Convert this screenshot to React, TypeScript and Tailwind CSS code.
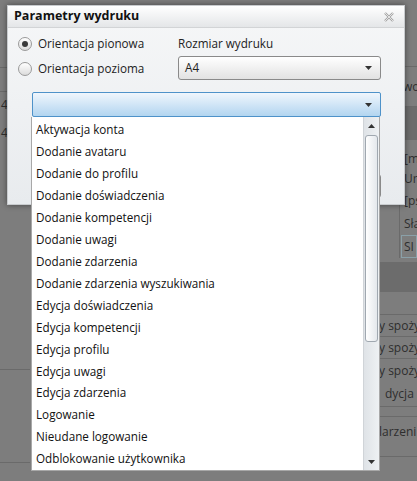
import React from 'react';

const ITEMS = [
  'Aktywacja konta',
  'Dodanie avataru',
  'Dodanie do profilu',
  'Dodanie doświadczenia',
  'Dodanie kompetencji',
  'Dodanie uwagi',
  'Dodanie zdarzenia',
  'Dodanie zdarzenia wyszukiwania',
  'Edycja doświadczenia',
  'Edycja kompetencji',
  'Edycja profilu',
  'Edycja uwagi',
  'Edycja zdarzenia',
  'Logowanie',
  'Nieudane logowanie',
  'Odblokowanie użytkownika',
];

const FONT = "font-['Open_Sans',sans-serif]";

function Caret({ up = false }: { up?: boolean }) {
  return (
    <svg width="7" height="4" viewBox="0 0 7 4" className="shrink-0">
      <path d={up ? 'M0 4 L3.5 0 L7 4 Z' : 'M0 0 L7 0 L3.5 4 Z'} fill="#333" />
    </svg>
  );
}

function Radio({ checked }: { checked?: boolean }) {
  return (
    <span className="w-[14px] h-[14px] rounded-full border border-[#9a9a9a] bg-gradient-to-b from-[#ffffff] to-[#dcdcdc] flex items-center justify-center shrink-0">
      {checked && <span className="w-[6px] h-[6px] rounded-full bg-[#3a3a3a]" />}
    </span>
  );
}

// dimmed page behind the modal
function Backdrop() {
  return (
    <div className="flex justify-between h-[481px] text-[12px] text-[#2e2e2e] whitespace-nowrap">
      <div className="w-[30px] flex flex-col">
        <div className="h-[68px] border-b border-[#6a6a6a]" />
        <div className="h-[24px] border-b border-[#6a6a6a]" />
        <div className="h-[26px] flex items-center pl-[1px]">4</div>
        <div className="h-[30px] flex items-center pl-[1px]">4</div>
        <div className="h-[222px] border-b border-[#6a6a6a]" />
        <div className="h-[93px] border-b border-[#6a6a6a]" />
      </div>
      <div className="w-[38px] flex flex-col overflow-hidden">
        <div className="h-[67px] border-b border-[#6a6a6a]" />
        <div className="h-[40px] flex items-center pl-[24px] border-b border-[#6a6a6a]">wo</div>
        <div className="h-[33px] bg-[#6c6c6c]" />
        <div className="flex flex-col border-l border-[#6a6a6a] ml-[20px] pl-[4px]">
          <div className="h-[28px] flex items-end">[m</div>
          <div className="h-[22px] flex items-center">Ur</div>
          <div className="h-[22px] flex items-center">[ps</div>
          <div className="h-[23px] flex items-center">Sła</div>
          <div className="h-[23px] flex items-center border border-[#8aa0a8] -ml-[3px] pl-[2px]">SI</div>
        </div>
        <div className="h-[4px]" />
        <div className="h-[30px] bg-[#6c6c6c]" />
        <div className="h-[23px] border-b border-[#6a6a6a]" />
        <div className="h-[22px] flex items-center border-b border-[#6a6a6a]">y spoży</div>
        <div className="h-[22px] flex items-center border-b border-[#6a6a6a]">y spoży</div>
        <div className="h-[23px] flex items-center">y spoży</div>
        <div className="h-[25px] flex items-center border-b border-[#6a6a6a] pl-[6px]">dycja</div>
        <div className="h-[10px] border-b border-[#6a6a6a]" />
        <div className="h-[30px] flex items-center">larzeni</div>
        <div className="h-[10px] border-b border-[#6a6a6a]" />
      </div>
    </div>
  );
}

export default function App() {
  return (
    <div className={`relative w-[417px] h-[481px] overflow-hidden bg-[#7d7d7d] ${FONT}`}>
      <Backdrop />

      {/* Dialog */}
      <div className="absolute left-[7px] top-[5px] w-[398px] h-[200px] flex flex-col border border-[#c8cbce] bg-gradient-to-b from-[#f6f7f8] to-[#e8ebee] shadow-[0_0_6px_rgba(0,0,0,0.45)]">
        <div className="h-[22px] flex items-center justify-between px-[6px] bg-gradient-to-b from-[#ffffff] to-[#e4e6e8] border-b border-[#d2d4d6]">
          <span className="text-[12.5px] font-bold text-[#111]">Parametry wydruku</span>
          <svg width="10" height="10" viewBox="0 0 10 10" className="mr-[4px]">
            <path d="M1 1 L9 9 M9 1 L1 9" stroke="#a4a4a4" strokeWidth="2.4" />
            <path d="M1 1 L9 9 M9 1 L1 9" stroke="#f4f4f4" strokeWidth="0.8" />
          </svg>
        </div>

        <div className="flex-1 flex flex-col pl-[10px] pr-[23px] pt-[4px] text-[11.7px] text-[#222]">
          <div className="flex">
            <div className="w-[160px] flex flex-col">
              <label className="h-[24px] flex items-center gap-[6px]">
                <Radio checked />
                <span>Orientacja pionowa</span>
              </label>
              <label className="h-[26px] flex items-center gap-[6px]">
                <Radio />
                <span>Orientacja pozioma</span>
              </label>
            </div>
            <div className="flex-1 flex flex-col">
              <div className="h-[24px] flex items-center">Rozmiar wydruku</div>
              <div className="h-[24px] flex items-center justify-between pl-[6px] pr-[8px] border border-[#8a8a8a] rounded-[3px] bg-gradient-to-b from-[#ffffff] to-[#e2e2e2]">
                <span>A4</span>
                <Caret />
              </div>
            </div>
          </div>

          <div className="ml-[14px] mt-[10px] h-[25px] flex items-center justify-end pr-[8px] border border-[#4e92c9] rounded-[2px] bg-gradient-to-b from-[#f0f6fc] to-[#b2d5f0]">
            <Caret />
          </div>

          <div className="flex justify-end mt-[57px]">
            <div className="w-[90px] h-[24px] border border-[#8a8a8a] rounded-[3px] bg-gradient-to-b from-[#ffffff] to-[#e2e2e2]" />
          </div>
        </div>
      </div>

      {/* Dropdown list */}
      <div className="absolute left-[31px] top-[117px] w-[349px] h-[354px] flex bg-white border border-[#a8a8a8] border-t-0 text-[11.7px] text-[#111]">
        <div className="flex-1 flex flex-col pt-[2px]">
          {ITEMS.map(item => (
            <div key={item} className="h-[22px] flex items-center pl-[4px] whitespace-nowrap">{item}</div>
          ))}
        </div>
        <div className="w-[16px] flex flex-col bg-gradient-to-r from-[#dfe3e7] to-[#eef1f3] border-l border-[#d0d4d8]">
          <div className="h-[18px] flex items-center justify-center">
            <Caret up />
          </div>
          <div className="h-[207px] mx-[1px] rounded-[3px] border border-[#a0a8b0] bg-gradient-to-r from-[#ffffff] to-[#e4e8ec]" />
          <div className="flex-1" />
          <div className="h-[16px] flex items-center justify-center">
            <Caret />
          </div>
        </div>
      </div>
    </div>
  );
}
